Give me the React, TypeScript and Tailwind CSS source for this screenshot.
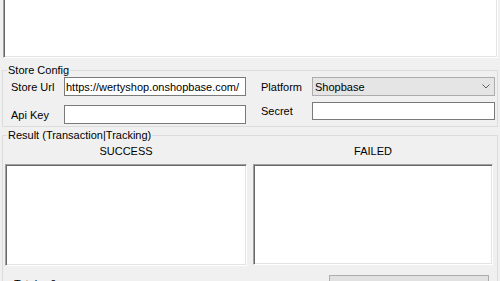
import React from "react";

function Sunken({ className = "" }: { className?: string }) {
  return (
    <div
      className={`bg-white border-l border-t border-l-[#a0a0a0] border-t-[#a0a0a0] border-r border-b border-r-white border-b-white shadow-[inset_1px_1px_0_#696969,inset_-1px_-1px_0_#e3e3e3] ${className}`}
    />
  );
}

export default function App() {
  return (
    <div
      className="w-[500px] h-[281px] overflow-hidden bg-[#f0f0f0] text-black text-[11px] leading-[14px]"
      style={{ fontFamily: '"Liberation Sans", Arial, sans-serif' }}
    >
      {/* Top output box (cut off at top) */}
      <div className="ml-[3px] w-[495px] h-[58px] bg-white border-l border-l-[#a0a0a0] border-r border-r-white border-b border-b-white shadow-[inset_1px_0_0_#696969,inset_-1px_-1px_0_#e3e3e3]" />

      {/* Store Config */}
      <fieldset className="mt-[5px] ml-[2px] w-[496px] border border-[#dcdcdc] pb-[2px]">
        <legend className="ml-[4px] px-[1px] leading-[14px]">Store Config</legend>
        <div className="flex">
          <div className="flex flex-col pl-[8px]">
            <div className="flex items-center">
              <span className="w-[53px]">Store Url</span>
              <div className="w-[182px] h-[19px] bg-white border border-[#7a7a7a] pl-[1px] flex items-center whitespace-nowrap overflow-hidden">
                https://wertyshop.onshopbase.com/
              </div>
            </div>
            <div className="flex items-center mt-[9px]">
              <span className="w-[53px]">Api Key</span>
              <div className="w-[182px] h-[19px] bg-white border border-[#7a7a7a]" />
            </div>
          </div>
          <div className="flex flex-col ml-[15px]">
            <div className="flex items-center">
              <span className="w-[51px]">Platform</span>
              <div className="w-[183px] h-[19px] bg-[#e5e5e5] border border-[#adadad] pl-[2px] pr-[4px] flex items-center justify-between">
                <span>Shopbase</span>
                <svg width="8" height="5" viewBox="0 0 8 5">
                  <polyline points="0.5,0.5 4,4 7.5,0.5" fill="none" stroke="#606060" strokeWidth="1" />
                </svg>
              </div>
            </div>
            <div className="flex items-center mt-[6px]">
              <span className="w-[51px]">Secret</span>
              <div className="w-[183px] h-[18px] bg-white border border-[#7a7a7a]" />
            </div>
          </div>
        </div>
      </fieldset>

      {/* Result */}
      <fieldset className="mt-[1px] ml-[2px] w-[496px] h-[200px] border border-[#dcdcdc]">
        <legend className="ml-[4px] px-[1px] leading-[14px]">Result (Transaction|Tracking)</legend>
        <div className="grid grid-cols-[242px_240px] gap-x-[6px] pl-[2px]">
          <div className="h-[22px] pt-[2px] text-center">SUCCESS</div>
          <div className="h-[22px] pt-[2px] text-center">FAILED</div>
          <Sunken className="h-[102px]" />
          <Sunken className="h-[101px]" />
        </div>
        <div className="flex items-start mt-[9px]">
          <div className="flex pl-[11px] pt-[2px] w-[326px]">
            <span>Total:</span>
            <span className="ml-[10px]">0</span>
          </div>
          <div className="w-[160px] h-[23px] bg-[#e1e1e1] border border-[#adadad]" />
        </div>
      </fieldset>
    </div>
  );
}
